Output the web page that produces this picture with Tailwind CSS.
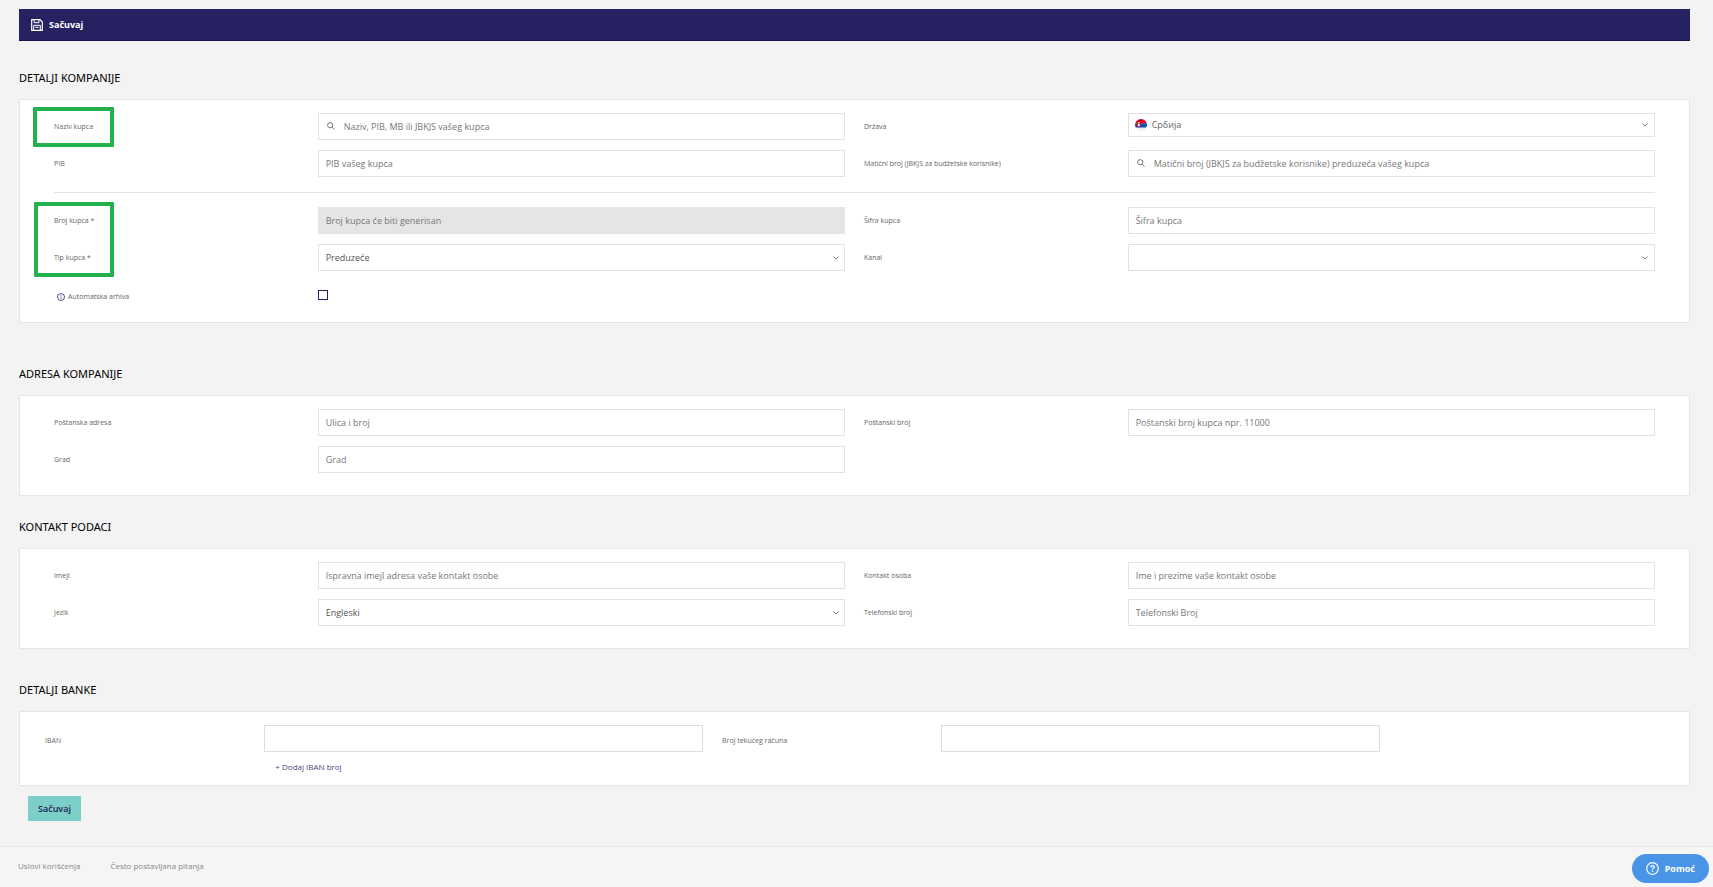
<!DOCTYPE html>
<html lang="sr-Latn">

<head>
  <meta charset="UTF-8">
  <meta name="viewport" content="width=device-width, initial-scale=1.0">
  <title>Novi kupac</title>
  <script src="https://cdn.jsdelivr.net/npm/@tailwindcss/browser@4"></script>
</head>

<body class="min-h-screen flex flex-col bg-[#f3f3f3] font-['Open_Sans','Noto_Sans',sans-serif] text-[9px] text-[#666]">
  <main class="flex-1 pl-[19px] pr-[23px] pt-[9px]">
    <!-- Toolbar -->
    <div class="h-8 flex items-center bg-[#262262] border-b border-[#15124d]">
      <button type="button" class="flex items-center gap-[6px] pl-3 text-white font-bold">
        <svg class="size-[12px]" viewBox="0 0 12 12" fill="none" stroke="currentColor">
          <path d="M.7.7h8.300l2.300 2.300v8.300H.7z" stroke-width="1.200" />
          <path d="M3.200.7v3h4.800v-3M2.700 11.300V6.300h6.600v5M4.300 8.300h3.400" />
        </svg>
        Sačuvaj
      </button>
    </div>

    <form>
      <!-- Detalji kompanije -->
      <h2 class="mt-7 mb-3 h-[18px] leading-[18px] text-[11px] text-black font-['Noto_Sans',sans-serif]">DETALJI KOMPANIJE</h2>
      <section class="relative bg-white border border-[#e5e5e5] px-[34px] pt-[13px] pb-[14px]">
        <div class="grid grid-cols-2 gap-x-[19px] gap-y-[10px]">
          <div class="flex items-start">
            <label for="naziv" class="w-1/3 text-[7px] leading-[27px]">Naziv kupca</label>
            <div class="relative w-2/3">
              <svg class="absolute left-[9px] top-[9px] size-2 text-[#777]" viewBox="0 0 8 8" fill="none" stroke="currentColor"><circle cx="3.2" cy="3.2" r="2.6" /><path d="M5.1 5.1 7.6 7.6" /></svg>
              <input id="naziv" type="text" placeholder="Naziv, PIB, MB ili JBKJS vašeg kupca" class="block w-full h-[27px] pl-[25px] pr-2 border border-[#e2e2e2] bg-white placeholder:text-[#777]">
            </div>
          </div>
          <div class="flex items-start">
            <label for="drzava" class="w-1/3 text-[7px] leading-[27px]">Država</label>
            <div class="relative w-2/3">
              <svg class="absolute left-[7px] top-[6px] size-3" viewBox="0 0 12 12">
                <clipPath id="flag"><circle cx="6" cy="6" r="6" /></clipPath>
                <g clip-path="url(#flag)">
                  <path fill="#f0f0f0" d="M0 0h12v12H0z" />
                  <path fill="#d80027" d="M0 0h12v4.500H0z" />
                  <path fill="#0052b4" d="M0 4.500h12v4H0z" />
                  <path fill="#d80027" d="M1.800 3.500h4v3c0 1.200-.8 1.700-2 2.100-1.200-.4-2-.9-2-2.100z" />
                  <path fill="#f3f3f3" d="M2.800 4.800h2v2l-1 1-1-1z" />
                  <path fill="#ffda44" d="M2.800 3h2v1.300h-2z" />
                </g>
              </svg>
              <select id="drzava" class="block w-full h-6 pl-[23px] border border-[#e2e2e2] bg-white appearance-none"><option>Србија</option></select>
              <svg class="absolute right-[7px] top-[10px] w-[6px] h-[4px] text-[#777]" viewBox="0 0 6 4" fill="none" stroke="currentColor"><path d="M.5.7 3 3 5.500.7" /></svg>
            </div>
          </div>
          <div class="flex items-start">
            <label for="pib" class="w-1/3 text-[7px] leading-[27px]">PIB</label>
            <input id="pib" type="text" placeholder="PIB vašeg kupca" class="w-2/3 h-[27px] px-[7px] border border-[#e2e2e2] bg-white placeholder:text-[#777]">
          </div>
          <div class="flex items-start">
            <label for="maticni" class="w-1/3 text-[7px] leading-[27px]">Matični broj (JBKJS za budžetske korisnike)</label>
            <div class="relative w-2/3">
              <svg class="absolute left-[9px] top-[9px] size-2 text-[#777]" viewBox="0 0 8 8" fill="none" stroke="currentColor"><circle cx="3.2" cy="3.2" r="2.6" /><path d="M5.1 5.1 7.6 7.6" /></svg>
              <input id="maticni" type="text" placeholder="Matični broj (JBKJS za budžetske korisnike) preduzeća vašeg kupca" class="block w-full h-[27px] pl-[25px] pr-2 border border-[#e2e2e2] bg-white placeholder:text-[#777]">
            </div>
          </div>
        </div>

        <hr class="mt-[15px] mb-[14px] border-[#e2e2e2]">

        <div class="grid grid-cols-2 gap-x-[19px] gap-y-[10px]">
          <div class="flex items-start">
            <label for="broj" class="w-1/3 text-[7px] leading-[27px]">Broj kupca *</label>
            <input id="broj" type="text" disabled placeholder="Broj kupca će biti generisan" class="w-2/3 h-[27px] px-[7px] border border-[#e5e5e5] bg-[#e5e5e5] placeholder:text-[#777]">
          </div>
          <div class="flex items-start">
            <label for="sifra" class="w-1/3 text-[7px] leading-[27px]">Šifra kupca</label>
            <input id="sifra" type="text" placeholder="Šifra kupca" class="w-2/3 h-[27px] px-[7px] border border-[#e2e2e2] bg-white placeholder:text-[#777]">
          </div>
          <div class="flex items-start">
            <label for="tip" class="w-1/3 text-[7px] leading-[27px]">Tip kupca *</label>
            <div class="relative w-2/3">
              <select id="tip" class="block w-full h-[27px] px-[7px] border border-[#e2e2e2] bg-white text-[#555] appearance-none"><option>Preduzeće</option></select>
              <svg class="absolute right-[6px] top-3 w-[6px] h-[4px] text-[#777]" viewBox="0 0 6 4" fill="none" stroke="currentColor"><path d="M.5.7 3 3 5.500.7" /></svg>
            </div>
          </div>
          <div class="flex items-start">
            <label for="kanal" class="w-1/3 text-[7px] leading-[27px]">Kanal</label>
            <div class="relative w-2/3">
              <select id="kanal" class="block w-full h-[27px] px-[7px] border border-[#e2e2e2] bg-white appearance-none"><option></option></select>
              <svg class="absolute right-[7px] top-3 w-[6px] h-[4px] text-[#777]" viewBox="0 0 6 4" fill="none" stroke="currentColor"><path d="M.5.7 3 3 5.500.7" /></svg>
            </div>
          </div>
          <div class="flex items-start h-[27px] pt-[9px]">
            <label for="arhiva" class="w-1/3 flex items-center gap-[3px] pl-[3px] text-[7px] leading-[14px]">
              <svg class="size-2" viewBox="0 0 8 8" fill="none" stroke="#262262"><circle cx="4" cy="4" r="3.500" stroke-width=".8" /><path stroke-width=".7" d="M4 2v.8M4 3.500V6" /></svg>
              Automatska arhiva
            </label>
            <input id="arhiva" type="checkbox" class="size-[10px] appearance-none border border-[#262262] checked:bg-[#262262]">
          </div>
        </div>

        <!-- Highlights over the labels -->
        <div class="absolute left-[13px] top-[7px] w-[81px] h-10 border-4 border-[#22b14c] rounded-[1px] pointer-events-none"></div>
        <div class="absolute left-[14px] top-[102px] w-20 h-[75px] border-4 border-[#22b14c] rounded-[1px] pointer-events-none"></div>
      </section>

      <!-- Adresa kompanije -->
      <h2 class="mt-[42px] mb-3 h-[18px] leading-[18px] text-[11px] text-black font-['Noto_Sans',sans-serif]">ADRESA KOMPANIJE</h2>
      <section class="bg-white border border-[#e5e5e5] px-[34px] pt-[13px] pb-[22px]">
        <div class="grid grid-cols-2 gap-x-[19px] gap-y-[10px]">
          <div class="flex items-start">
            <label for="adresa" class="w-1/3 text-[7px] leading-[27px]">Poštanska adresa</label>
            <input id="adresa" type="text" placeholder="Ulica i broj" class="w-2/3 h-[27px] px-[7px] border border-[#e2e2e2] bg-white placeholder:text-[#777]">
          </div>
          <div class="flex items-start">
            <label for="postanski" class="w-1/3 text-[7px] leading-[27px]">Poštanski broj</label>
            <input id="postanski" type="text" placeholder="Poštanski broj kupca npr. 11000" class="w-2/3 h-[27px] px-[7px] border border-[#e2e2e2] bg-white placeholder:text-[#777]">
          </div>
          <div class="flex items-start">
            <label for="grad" class="w-1/3 text-[7px] leading-[27px]">Grad</label>
            <input id="grad" type="text" placeholder="Grad" class="w-2/3 h-[27px] px-[7px] border border-[#e2e2e2] bg-white placeholder:text-[#777]">
          </div>
        </div>
      </section>

      <!-- Kontakt podaci -->
      <h2 class="mt-[22px] mb-3 h-[18px] leading-[18px] text-[11px] text-black font-['Noto_Sans',sans-serif]">KONTAKT PODACI</h2>
      <section class="bg-white border border-[#e5e5e5] px-[34px] pt-[13px] pb-[22px]">
        <div class="grid grid-cols-2 gap-x-[19px] gap-y-[10px]">
          <div class="flex items-start">
            <label for="imejl" class="w-1/3 text-[7px] leading-[27px]">imejl</label>
            <input id="imejl" type="email" placeholder="Ispravna imejl adresa vaše kontakt osobe" class="w-2/3 h-[27px] px-[7px] border border-[#e2e2e2] bg-white placeholder:text-[#777]">
          </div>
          <div class="flex items-start">
            <label for="osoba" class="w-1/3 text-[7px] leading-[27px]">Kontakt osoba</label>
            <input id="osoba" type="text" placeholder="Ime i prezime vaše kontakt osobe" class="w-2/3 h-[27px] px-[7px] border border-[#e2e2e2] bg-white placeholder:text-[#777]">
          </div>
          <div class="flex items-start">
            <label for="jezik" class="w-1/3 text-[7px] leading-[27px]">Jezik</label>
            <div class="relative w-2/3">
              <select id="jezik" class="block w-full h-[27px] px-[7px] border border-[#e2e2e2] bg-white text-[#555] appearance-none"><option>Engleski</option></select>
              <svg class="absolute right-[6px] top-3 w-[6px] h-[4px] text-[#777]" viewBox="0 0 6 4" fill="none" stroke="currentColor"><path d="M.5.7 3 3 5.500.7" /></svg>
            </div>
          </div>
          <div class="flex items-start">
            <label for="telefon" class="w-1/3 text-[7px] leading-[27px]">Telefonski broj</label>
            <input id="telefon" type="tel" placeholder="Telefonski Broj" class="w-2/3 h-[27px] px-[7px] border border-[#e2e2e2] bg-white placeholder:text-[#777]">
          </div>
        </div>
      </section>

      <!-- Detalji banke -->
      <h2 class="mt-8 mb-3 h-[18px] leading-[18px] text-[11px] text-black font-['Noto_Sans',sans-serif]">DETALJI BANKE</h2>
      <section class="bg-white border border-[#e5e5e5] pt-[13px] pb-[9px]">
        <div class="w-4/5 ml-[25px] grid grid-cols-2 gap-x-[19px]">
          <div class="flex items-start">
            <label for="iban" class="w-1/3 pt-[2px] text-[7px] leading-[27px]">IBAN</label>
            <input id="iban" type="text" class="w-2/3 h-[27px] px-[7px] border border-[#dedede] bg-white">
          </div>
          <div class="flex items-start">
            <label for="racun" class="w-1/3 pt-[2px] text-[7px] leading-[27px]">Broj tekućeg računa</label>
            <input id="racun" type="text" class="w-2/3 h-[27px] px-[7px] border border-[#dedede] bg-white">
          </div>
          <div class="mt-1 h-[18px] flex">
            <div class="w-1/3"></div>
            <button type="button" class="pl-[11px] text-[8px] leading-[18px] text-[#4b487c]">+ Dodaj IBAN broj</button>
          </div>
        </div>
      </section>

      <button type="submit" class="block mt-[10px] ml-[9px] h-[25px] px-[10px] rounded-[1px] bg-[#7bcfc8] text-[#1c1a4d] font-semibold">Sačuvaj</button>
    </form>
  </main>

  <footer class="h-[41px] flex gap-[30px] px-[18px] pt-[10px] border-t border-[#e5e5e5] bg-[#f5f5f5] text-[8px] leading-[18px] text-[#888]">
    <a href="#">Uslovi korišćenja</a>
    <a href="#">Često postavljana pitanja</a>
  </footer>

  <!-- Help widget -->
  <button type="button" class="fixed right-1 bottom-1 h-[29px] flex items-center gap-[6px] px-[14px] rounded-full bg-[#4a94e8] text-white font-bold font-['Noto_Sans',sans-serif]">
    <svg class="size-[13px]" viewBox="0 0 13 13" fill="none" stroke="currentColor"><circle cx="6.500" cy="6.500" r="5.800" stroke-width="1.200" /><path stroke-width="1.300" d="M4.800 5.200c0-2.200 3.400-2.200 3.400-.1 0 1.200-1.700 1.200-1.700 2.500M6.500 8.600V10" /></svg>
    Pomoć
  </button>
</body>

</html>
